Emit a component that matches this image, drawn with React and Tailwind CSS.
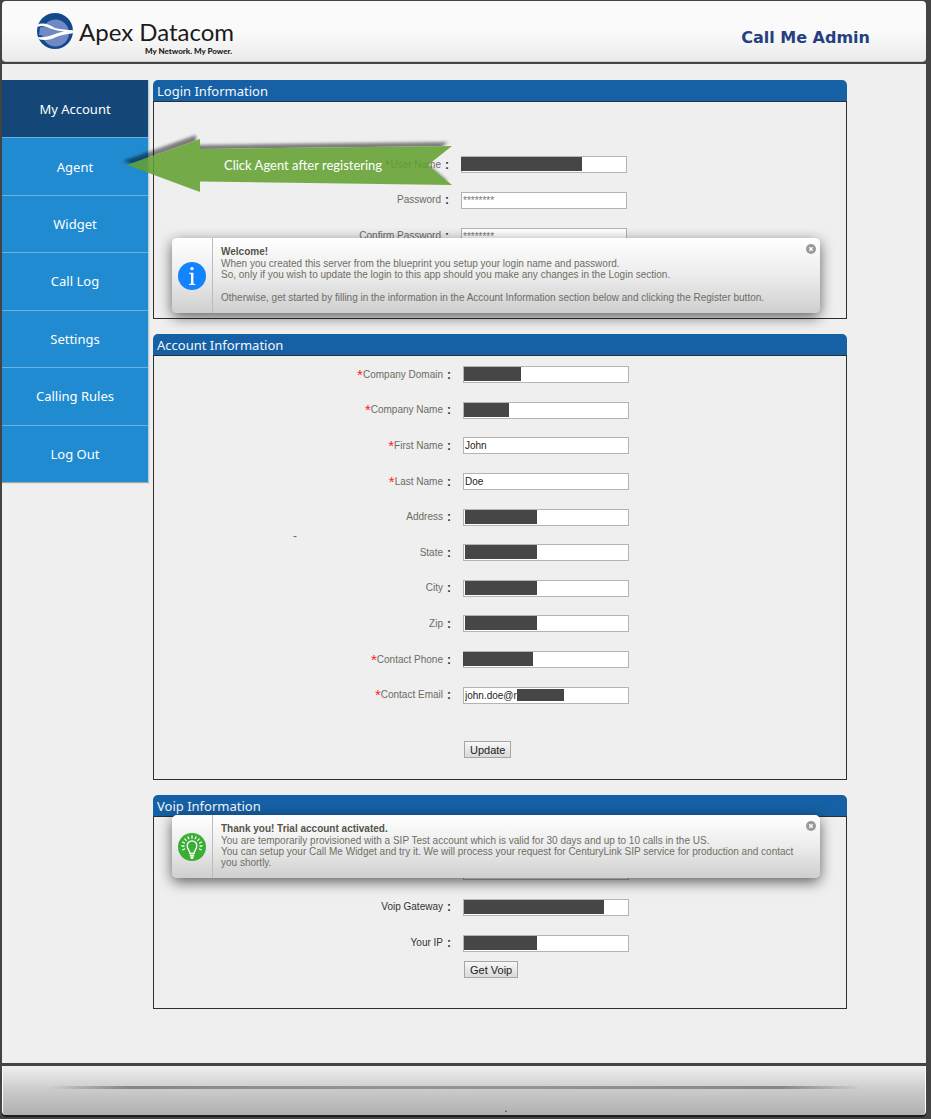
import React from "react";

const NAV = ["My Account", "Agent", "Widget", "Call Log", "Settings", "Calling Rules", "Log Out"];

const LOGIN_FIELDS = [
  { id: "user-name", label: "User Name", required: true, mask: "left-0 top-px w-[121px] h-3.5" },
  { id: "password", label: "Password", type: "password", placeholder: "********" },
  { id: "confirm-password", label: "Confirm Password", type: "password", placeholder: "********" },
];

const ACCOUNT_FIELDS = [
  { id: "company-domain", label: "Company Domain", required: true, mask: "left-px top-px w-[57px] h-3.5" },
  { id: "company-name", label: "Company Name", required: true, mask: "left-px top-px w-[45px] h-3.5" },
  { id: "first-name", label: "First Name", required: true, value: "John" },
  { id: "last-name", label: "Last Name", required: true, value: "Doe" },
  { id: "address", label: "Address", mask: "left-[2px] top-px w-[72px] h-3.5" },
  { id: "state", label: "State", mask: "left-[2px] top-px w-[72px] h-3.5" },
  { id: "city", label: "City", mask: "left-[2px] top-px w-[72px] h-3.5" },
  { id: "zip", label: "Zip", mask: "left-[2px] top-px w-[72px] h-3.5" },
  { id: "contact-phone", label: "Contact Phone", required: true, mask: "left-0 top-px w-[70px] h-3.5" },
  { id: "contact-email", label: "Contact Email", required: true, value: "john.doe@r", mask: "left-[54px] top-[2px] w-[47px] h-3" },
];

const VOIP_FIELDS = [
  { id: "voip-user", label: "Voip User" },
  { id: "voip-gateway", label: "Voip Gateway", mask: "left-px top-px w-[140px] h-3.5" },
  { id: "your-ip", label: "Your IP", mask: "left-px top-px w-[73px] h-3.5" },
];

function Logo() {
  return (
    <a href="#home" className="flex items-start gap-[6px] text-[#1c1a1b]">
      <svg className="size-9" viewBox="0 0 36 36" aria-hidden="true">
        <defs>
          <clipPath id="globe">
            <circle cx="18" cy="18" r="18" />
          </clipPath>
        </defs>
        <g clipPath="url(#globe)">
          <rect width="36" height="36" fill="#11498c" />
          <circle cx="18.500" cy="20" r="13.500" fill="#7088c3" />
          <path d="M-1 11.500C6 9 12 11 18 15C24 17 31 16.500 37 17.500V20C30 21 24 21.500 19 24C12 28 6 27.500 -1 25.500V24C7 25 13 23 18 21C21 19.800 24 19 27 18.500C20 18 14 16 10 14C6 12.500 3 13 -1 14.500Z" fill="#fff" />
          <path d="M3 14.500C8 13 12 16 16 18C10 22 6 23 2 22Z" fill="#7088c3" />
        </g>
      </svg>
      <span className="flex flex-col items-end pt-1">
        <span className="font-['Lato',sans-serif] text-[24px] leading-[30px]">Apex Datacom</span>
        <span className="pr-[2px] font-['Lato',sans-serif] text-[8px] font-black leading-[8px]">My Network. My Power.</span>
      </span>
    </a>
  );
}

function Field({ field, dark }) {
  return (
    <>
      <div className="flex items-center justify-end gap-[4px]">
        <label htmlFor={field.id} className={`flex items-center text-[10px] leading-3 ${dark ? "text-[#333]" : "text-[#6d6b62]"}`}>
          {field.required && <span className="text-[15px] leading-3 text-[#f22]">*</span>}
          {field.label}
        </label>
        <span className="text-[12px] font-bold leading-3 text-[#333]">:</span>
      </div>
      <div className="flex items-center">
        <div className="relative">
          <input
            id={field.id}
            type={field.type || "text"}
            defaultValue={field.value}
            placeholder={field.placeholder}
            className="block h-[17px] w-[166px] border border-[#b4b4b4] bg-white px-px text-[10px] leading-3 text-[#222] outline-none placeholder:text-[#777]"
          />
          {field.mask && <span className={`absolute bg-[#464646] ${field.mask}`} />}
        </div>
      </div>
    </>
  );
}

function Panel({ title, children, notice }) {
  return (
    <section className="relative">
      <h2 className="h-[21px] rounded-t-[5px] bg-[#1660a5] px-1 font-['Noto_Sans',sans-serif] text-[13px] leading-[22px] text-[#f3f7fb]">{title}</h2>
      <div className="border border-[#2e2e2e]">{children}</div>
      {notice}
    </section>
  );
}

function Notice({ className, icon, title, children }) {
  return (
    <div role="status" className={`absolute left-[19px] right-[27px] z-10 flex rounded-[5px] bg-linear-to-b from-white via-[#ececec] to-[#cfcfcf] shadow-[0_4px_14px_rgba(0,0,0,0.6)] ${className}`}>
      <div className="flex w-[41px] shrink-0 items-center justify-center border-r border-[#bbb]">{icon}</div>
      <div className="flex-1 px-2 pt-2 text-[10px] leading-[11px] text-[#6f6e64]">
        <p className="mb-px font-bold text-[#55544c]">{title}</p>
        {children}
      </div>
      <button type="button" aria-label="Close" className="mr-1 mt-[6px] flex size-[10px] items-center justify-center rounded-full bg-[#999]">
        <svg className="size-[10px]" viewBox="0 0 10 10" aria-hidden="true">
          <path d="M3.300 3.200L6.700 6.800M6.700 3.200L3.300 6.800" stroke="#fff" strokeWidth="1.300" />
        </svg>
      </button>
    </div>
  );
}

function InfoIcon() {
  return (
    <svg className="size-7" viewBox="0 0 28 28" aria-hidden="true">
      <circle cx="14" cy="14" r="14" fill="#1483ff" />
      <circle cx="14" cy="6.600" r="1.700" fill="#fff" />
      <path d="M11 10.800H15.400V21.600L17.300 22.300V23H11.100V22.300L13 21.600V12.200L11 11.500Z" fill="#fff" />
    </svg>
  );
}

function BulbIcon() {
  return (
    <svg className="size-7" viewBox="0 0 28 28" aria-hidden="true">
      <circle cx="14" cy="14" r="14" fill="#3aae35" />
      <g fill="none" stroke="#fff" strokeWidth="1.300" strokeLinecap="round">
        <path d="M12 20.500C12 17.500 9.200 16 9.200 12.700A4.800 4.800 0 0 1 18.800 12.700C18.800 16 16 17.500 16 20.500Z" />
        <path d="M12.300 22.300H15.700M12.600 24H15.400M13.500 25.300H14.500" />
        <path d="M14 3V5M10 3.800L10.800 5.700M18 3.800L17.200 5.700M6.800 5.900L8.200 7.400M21.200 5.900L19.800 7.400M4.600 9.200L6.500 10M23.400 9.200L21.500 10M4 13H6M24 13H22M4.800 16.800L6.600 16M23.200 16.800L21.400 16" />
      </g>
    </svg>
  );
}

function Callout() {
  return (
    <div className="pointer-events-none absolute left-[120px] top-[64px] z-20 flex h-[70px] w-[340px] items-center">
      <svg className="absolute inset-0 size-full overflow-visible" viewBox="0 0 340 70" aria-hidden="true">
        <defs>
          <filter id="soft" x="-10%" y="-30%" width="120%" height="160%">
            <feGaussianBlur stdDeviation="1.500" />
          </filter>
          <clipPath id="outside">
            <path clipRule="evenodd" d="M-20 -20H360V90H-20ZM5 37L78 11V21L330 18L306 37L330 57L78 53.500V64Z" />
          </clipPath>
        </defs>
        <g clipPath="url(#outside)">
          <path d="M1 33L74 7V17L326 14L302 33L326 53L74 49.500V60Z" fill="#000" opacity=".48" filter="url(#soft)" />
        </g>
        <path d="M5 37L78 11V21L330 18L306 37L330 57L78 53.500V64Z" fill="#62a12f" opacity=".87" />
      </svg>
      <p className="relative pl-[102px] pt-[3px] font-['Lato',sans-serif] text-[13px] leading-4 text-white">Click Agent after registering</p>
    </div>
  );
}

const BUTTON = "h-[17px] border border-[#a6a6a6] bg-linear-to-b from-[#f7f7f7] to-[#dadada] px-[5px] text-[11px] leading-[14px] text-[#222]";

export default function App() {
  return (
    <div className="bg-[#444] pb-1 pl-[2px] pr-[5px] pt-px font-['Liberation_Sans',Arial,sans-serif]">
      <header className="flex h-[61px] items-start justify-between rounded-[4px] border-b border-[#ccc] bg-linear-to-b from-[#fafafa] via-[#fafafa] to-[#ebebeb] pl-[35px] pr-14 pt-3">
        <Logo />
        <h1 className="pt-[14px] font-['DejaVu_Sans',Verdana,sans-serif] text-[16px] font-bold leading-[22px] text-[#243f82]">Call Me Admin</h1>
      </header>

      <div className="relative mt-[2px] flex items-start bg-[#efefef] pb-[54px] pr-[79px] pt-4">
        <nav className="mr-1 grid h-[402px] w-[147px] shrink-0 auto-rows-fr border-r border-[#bcd0de] font-['Noto_Sans',sans-serif] text-[13px] leading-4 text-white shadow-[0_1px_1px_rgba(0,0,0,0.3)]">
          {NAV.map((item, i) => (
            <a
              key={item}
              href={`#${item.toLowerCase().replace(" ", "-")}`}
              className={`flex items-center justify-center ${i === 0 ? "bg-[#144677]" : "border-t border-[#6cb1dc] bg-[#208bd0]"}`}
            >
              {item}
            </a>
          ))}
        </nav>

        <main className="flex min-w-0 flex-1 flex-col gap-[15px]">
          <Panel
            title="Login Information"
            notice={
              <Notice className="top-[158px] h-[75px]" icon={<InfoIcon />} title="Welcome!">
                <p>When you created this server from the blueprint you setup your login name and password.</p>
                <p>So, only if you wish to update the login to this app should you make any changes in the Login section.</p>
                <p className="mt-3">Otherwise, get started by filling in the information in the Account Information section below and clicking the Register button.</p>
              </Notice>
            }
          >
            <form className="grid h-[216px] grid-cols-[295px_1fr] grid-rows-[repeat(3,1fr)] gap-x-3 pb-16 pt-[45px]">
              {LOGIN_FIELDS.map((f) => <Field key={f.id} field={f} />)}
            </form>
          </Panel>

          <Panel title="Account Information">
            <form className="relative pb-[21px] pt-px">
              <div className="grid h-[356px] grid-cols-[297px_1fr] grid-rows-[repeat(10,1fr)] gap-x-3">
                {ACCOUNT_FIELDS.map((f) => <Field key={f.id} field={f} />)}
              </div>
              <span className="absolute left-[139px] top-[172px] text-[12px] leading-4 text-[#666]">-</span>
              <div className="mt-7 flex pl-[310px]">
                <button type="button" className={BUTTON}>Update</button>
              </div>
            </form>
          </Panel>

          <Panel
            title="Voip Information"
            notice={
              <Notice className="top-5 h-[63px]" icon={<BulbIcon />} title="Thank you! Trial account activated.">
                <p>You are temporarily provisioned with a SIP Test account which is valid for 30 days and up to 10 calls in the US.</p>
                <p>You can setup your Call Me Widget and try it. We will process your request for CenturyLink SIP service for production and contact</p>
                <p>you shortly.</p>
              </Notice>
            }
          >
            <form className="pb-[30px] pt-[37px]">
              <div className="grid h-[107px] grid-cols-[297px_1fr] grid-rows-[repeat(3,1fr)] gap-x-3">
                {VOIP_FIELDS.map((f) => <Field key={f.id} field={f} dark />)}
              </div>
              <div className="flex pl-[310px]">
                <button type="button" className={BUTTON}>Get Voip</button>
              </div>
            </form>
          </Panel>
        </main>
        <Callout />
      </div>

      <footer className="mt-[3px] flex h-[49px] flex-col items-center rounded-b-[4px] border-x border-white bg-linear-to-b from-[#f0f0f0] via-[#cacaca] to-[#b0b0b0] shadow-[0_2px_0_#1d1d1d]">
        <div className="mr-[18px] mt-5 h-[3px] w-[88%] shrink-0 rounded-full bg-linear-to-r from-transparent via-[#858585] via-10% to-transparent">
          <div className="h-full w-full bg-linear-to-l from-transparent via-[#858585] via-10% to-transparent" />
        </div>
        <p className="pl-[84px] pt-[11px] text-[12px] leading-4 text-[#333]">.</p>
      </footer>
    </div>
  );
}
